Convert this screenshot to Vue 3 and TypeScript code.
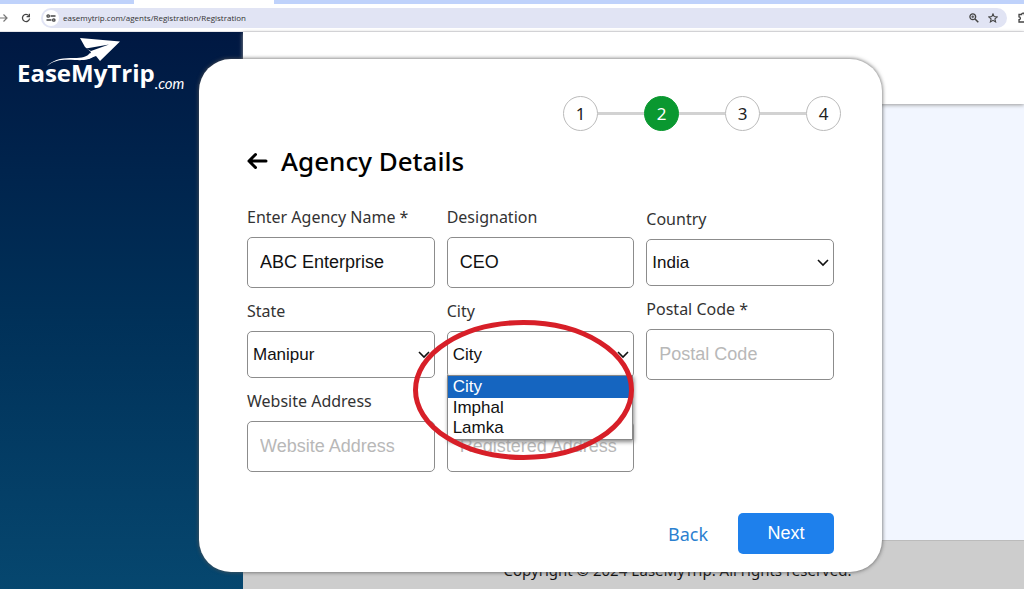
<script setup lang="ts">
import { ref } from 'vue'

const steps: number[] = [1, 2, 3, 4]
const currentStep = 2
const cities: string[] = ['City', 'Imphal', 'Lamka']

const url = ref('easemytrip.com/agents/Registration/Registration')
const agencyName = ref('ABC Enterprise')
const designation = ref('CEO')
const country = ref('India')
const state = ref('Manipur')
const city = ref('City')
const postalCode = ref('')
const website = ref('')
const registered = ref('')
</script>

<template>
  <div class="window">
    <div class="tabs"><span class="tab-left"></span><span class="tab-active"></span><span class="tab-right"></span></div>
    <div class="toolbar">
      <button class="tool forward" type="button" aria-label="Forward">
        <svg width="8" height="10" viewBox="0 0 8 10"><path d="M0 5H7M3.5 1.500L7 5L3.500 8.500" fill="none" stroke="#777" stroke-width="1.200" /></svg>
      </button>
      <button class="tool" type="button" aria-label="Reload">
        <svg width="10" height="10" viewBox="0 0 10 10"><path d="M8.600 5.500A3.600 3.600 0 1 1 7.800 2.600" fill="none" stroke="#444" stroke-width="1.300" /><path d="M9 .8V4.200H5.600V3H7.800V.8Z" fill="#444" /></svg>
      </button>
      <div class="address">
        <span class="site">
          <svg width="10" height="8" viewBox="0 0 10 8" fill="none" stroke="#444" stroke-width="1.300"><circle cx="2.200" cy="2" r="1.200" /><path d="M4.500 2H9.500M.5 6H5.500" /><circle cx="7.800" cy="6" r="1.200" /></svg>
        </span>
        <input v-model="url" class="url" type="text" aria-label="Address" />
        <button class="tool" type="button" aria-label="Zoom">
          <svg width="10" height="10" viewBox="0 0 10 10" fill="none" stroke="#444"><circle cx="3.800" cy="3.800" r="2.900" stroke-width="1.300" /><path d="M6 6L9.300 9.300" stroke-width="1.500" /><path d="M2.300 3.800H5.300M3.800 2.300V5.300" stroke-width=".9" /></svg>
        </button>
        <button class="tool" type="button" aria-label="Bookmark">
          <svg width="10" height="10" viewBox="0 0 10 10"><path d="M5 .9L6.200 3.600L9.200 3.900L6.900 5.900L7.600 8.900L5 7.300L2.400 8.900L3.100 5.900L.8 3.900L3.800 3.600Z" fill="none" stroke="#444" stroke-width="1.100" /></svg>
        </button>
      </div>
      <button class="tool extensions" type="button" aria-label="Extensions">
        <svg width="10" height="11" viewBox="0 0 10 11"><path d="M1 2.500H3.600A1.400 1.400 0 0 1 6.400 2.500H9V10H1V7.600A1.400 1.400 0 0 0 1 4.800Z" fill="none" stroke="#444" stroke-width="1.300" /></svg>
      </button>
    </div>

    <div class="page">
      <div class="backdrop">
        <aside class="sidebar">
          <a class="logo" href="#" aria-label="EaseMyTrip.com">
            <svg class="plane" width="74" height="30" viewBox="0 0 74 30" fill="#fff">
              <path d="M33 0L73 3.500L53 23L49 18L41 21L44 14L38 9Z" />
              <path d="M39 10.500L62 6.500L44 13" fill="#001a42" />
              <path d="M0 28C8 20 17 20 27 20C35 20 40 19 43 15L47 18C43 22 36 22.500 28 22C17 21.500 9 21 0 28Z" />
            </svg>
            <span class="brand"><span class="name">EaseMyTrip</span><span class="domain">.com</span></span>
          </a>
        </aside>
        <div class="main">
          <header class="header"></header>
          <div class="content"></div>
          <footer class="footer">Copyright © 2024 EaseMyTrip. All rights reserved.</footer>
        </div>
      </div>

      <form class="card" @submit.prevent>
        <ol class="steps">
          <li v-for="step in steps" :key="step" class="step" :class="{ current: step === currentStep }">
            <span class="dot">{{ step }}</span>
          </li>
        </ol>

        <div class="title">
          <button class="arrow" type="button" aria-label="Go back">
            <svg width="21" height="18" viewBox="0 0 21 18"><path d="M19 9H2M8.500 2.500L2 9L8.500 15.500" fill="none" stroke="#000" stroke-width="3" stroke-linecap="round" stroke-linejoin="round" /></svg>
          </button>
          <h1>Agency Details</h1>
        </div>

        <div class="fields">
          <div class="field">
            <label for="agency">Enter Agency Name *</label>
            <input id="agency" v-model="agencyName" type="text" />
          </div>
          <div class="field">
            <label for="designation">Designation</label>
            <input id="designation" v-model="designation" type="text" />
          </div>
          <div class="field">
            <label for="country">Country</label>
            <div class="picker">
              <select id="country" v-model="country"><option>India</option></select>
              <svg class="chevron" width="12" height="8" viewBox="0 0 12 8"><path d="M1 1L6 6L11 1" /></svg>
            </div>
          </div>
          <div class="field">
            <label for="state">State</label>
            <div class="picker">
              <select id="state" v-model="state"><option>Manipur</option></select>
              <svg class="chevron" width="12" height="8" viewBox="0 0 12 8"><path d="M1 1L6 6L11 1" /></svg>
            </div>
          </div>
          <div class="field city">
            <label for="city">City</label>
            <div class="picker">
              <select id="city" v-model="city"><option v-for="name in cities" :key="name">{{ name }}</option></select>
              <svg class="chevron" width="12" height="8" viewBox="0 0 12 8"><path d="M1 1L6 6L11 1" /></svg>
            </div>
            <ul class="menu" role="listbox" aria-label="City">
              <li v-for="name in cities" :key="name" role="option" :aria-selected="name === city" :class="{ chosen: name === city }" @click="city = name">{{ name }}</li>
            </ul>
            <svg class="ring" width="221" height="140" viewBox="0 0 221 140"><ellipse cx="110.500" cy="70" rx="108" ry="67.500" /></svg>
          </div>
          <div class="field">
            <label for="postal">Postal Code *</label>
            <input id="postal" v-model="postalCode" type="text" placeholder="Postal Code" />
          </div>
          <div class="field">
            <label for="website">Website Address</label>
            <input id="website" v-model="website" type="text" placeholder="Website Address" />
          </div>
          <div class="field">
            <label for="registered">&nbsp;</label>
            <input id="registered" v-model="registered" type="text" placeholder="Registered Address" aria-label="Registered Address" />
          </div>
        </div>

        <div class="actions">
          <a class="back" href="#">Back</a>
          <button class="next" type="submit">Next</button>
        </div>
      </form>
    </div>
  </div>
</template>

<style>
body {
  margin: 0;
}
</style>

<style scoped>
* {
  box-sizing: border-box;
}
.window {
  display: flex;
  flex-direction: column;
  min-height: 100vh;
  overflow: hidden;
  font-family: "Noto Sans", "Open Sans", sans-serif;
  color: #222;
}
button {
  font: inherit;
  border: 0;
  padding: 0;
  background: none;
  cursor: pointer;
}
svg {
  display: block;
}
.tabs {
  display: flex;
  height: 4px;
  background: #bfd2fb;
}
.tab-left {
  width: 134px;
}
.tab-active {
  width: 140px;
  background: #fff;
}
.toolbar {
  display: flex;
  align-items: center;
  height: 28px;
  gap: 13px;
  background: #fff;
  border-bottom: 1px solid #e4e4e8;
  overflow: hidden;
}
.tool {
  flex: none;
}
.address {
  display: flex;
  flex: 1;
  align-items: center;
  gap: 9px;
  height: 20px;
  margin-left: -3px;
  padding-right: 9px;
  border-radius: 10px;
  background: #e1e4f4;
}
.site {
  display: grid;
  place-items: center;
  width: 16px;
  height: 16px;
  margin-left: 2px;
  border-radius: 8px;
  background: #fff;
}
.url {
  flex: 1;
  margin-left: -5px;
  padding: 0;
  border: 0;
  background: none;
  font: 8px "Open Sans", sans-serif;
  color: #333;
}
.extensions {
  margin: 0 -4px 0 -2px;
}
.page {
  display: grid;
  flex: 1;
}
.backdrop,
.card {
  grid-area: 1 / 1;
}
.backdrop {
  display: flex;
}
.sidebar {
  flex: none;
  width: 243px;
  padding: 6px 0 0 17px;
  background: linear-gradient(#001842, #003058 50%, #06476f);
}
.logo {
  display: block;
  color: #fff;
  text-decoration: none;
}
.plane {
  margin: 0 0 -12px 30px;
}
.brand {
  display: flex;
  align-items: flex-end;
}
.name {
  font-family: "Open Sans", sans-serif;
  font-size: 24px;
  font-weight: 700;
  line-height: 34px;
}
.domain {
  font-family: Lato, sans-serif;
  font-size: 15px;
  font-style: italic;
  line-height: 14px;
}
.main {
  display: flex;
  flex: 1;
  flex-direction: column;
}
.header {
  position: relative;
  height: 72px;
  background: #fff;
  box-shadow: 0 1px 4px #999;
}
.content {
  flex: 1;
  background: #f2f6ff;
}
.footer {
  height: 49px;
  padding: 17px 0 0 88px;
  border-top: 1px solid #bbb;
  background: #cdcdcd;
  text-align: center;
  font-size: 15px;
  line-height: 24px;
  color: #111;
}
.card {
  position: relative;
  display: flex;
  flex-direction: column;
  margin: 27px 142px 17px 199px;
  padding: 37px 48px 18px;
  border-radius: 32px;
  background: #fff;
  box-shadow: 0 0 4px #555;
}
.steps {
  display: flex;
  justify-content: flex-end;
  margin: 0 -7px 0 0;
  padding: 0;
  list-style: none;
}
.step {
  display: flex;
  align-items: center;
}
.step + .step::before {
  content: "";
  width: 46px;
  height: 3px;
  background: #d2d2d2;
}
.dot {
  display: grid;
  place-items: center;
  width: 35px;
  height: 35px;
  border: 1px solid #bbb;
  border-radius: 50%;
  font-size: 17px;
  line-height: 24px;
}
.current .dot {
  border-color: #0a9830;
  background: #0a9830;
  color: #fff;
}
.title {
  display: flex;
  align-items: center;
  gap: 13px;
  margin: 12px 0 26px;
}
h1 {
  margin: 0;
  font-size: 26px;
  font-weight: 500;
  line-height: 36px;
  color: #000;
}
.fields {
  display: grid;
  grid-template-columns: repeat(3, minmax(0, 1fr));
  align-items: center;
  gap: 9px 12px;
}
.field {
  position: relative;
  display: flex;
  flex-direction: column;
  gap: 8px;
}
label {
  font-size: 16px;
  line-height: 24px;
  color: #333;
}
.field input,
select {
  width: 100%;
  border: 1px solid #8c8c8c;
  border-radius: 5px;
  background: #fff;
  font-family: "Liberation Sans", Arial, sans-serif;
  color: #111;
}
.field input {
  height: 51px;
  padding: 0 12px;
  font-size: 18px;
}
.field input::placeholder {
  color: #b8b8b8;
}
.picker {
  display: grid;
  align-items: center;
}
select,
.chevron {
  grid-area: 1 / 1;
}
select {
  appearance: none;
  height: 47px;
  padding: 0 24px 0 5px;
  font-size: 17px;
}
.chevron {
  justify-self: end;
  margin-right: 5px;
  fill: none;
  stroke: #111;
  stroke-width: 1.600;
  pointer-events: none;
}
.city {
  z-index: 1;
}
.menu {
  position: absolute;
  top: 76px;
  left: 0;
  right: 1px;
  margin: 0;
  padding: 0 0 1px;
  border: 1px solid #888;
  background: #fff;
  box-shadow: 1px 2px 4px #888;
  list-style: none;
  font: 17px/20px "Liberation Sans", Arial, sans-serif;
  color: #111;
}
.menu li {
  padding: 0 5px;
}
.menu .chosen {
  background: #1565c0;
  color: #fff;
  line-height: 22px;
}
.ring {
  position: absolute;
  top: 21px;
  left: -34px;
  fill: none;
  stroke: #d71f28;
  stroke-width: 5;
  pointer-events: none;
}
.actions {
  display: flex;
  align-items: center;
  justify-content: flex-end;
  gap: 30px;
  margin-top: auto;
}
.back {
  font-size: 18px;
  color: #2b80d0;
  text-decoration: none;
}
.next {
  width: 96px;
  height: 41px;
  border-radius: 5px;
  background: #1e80ec;
  font-family: "Liberation Sans", Arial, sans-serif;
  font-size: 18px;
  color: #fff;
}
</style>
